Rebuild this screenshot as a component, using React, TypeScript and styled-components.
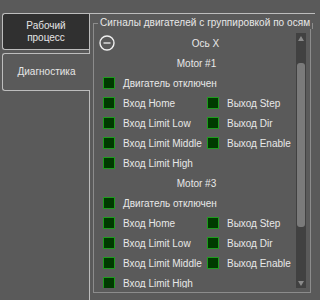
import React from 'react';
import styled, { createGlobalStyle } from 'styled-components';

const GlobalStyle = createGlobalStyle`
	html, body {
		margin: 0;
		padding: 0;
		background: #5a5a5a;
	}
	body {
		font-family: 'Liberation Sans', Arial, sans-serif;
		font-size: 10px;
		color: #e8e8e8;
	}
`;

const Window = styled('div')`
	display: flex;
	width: 315px;
	height: 300px;
	overflow: hidden;
	background: #5a5a5a;
`;

const TabBar = styled('div')`
	display: flex;
	flex-direction: column;
	gap: 3px;
	width: 87px;
	padding: 13px 0 0 2px;
	flex-shrink: 0;
`;

const Tab = styled('div')<{ $active?: boolean }>`
	position: relative;
	z-index: ${(p) => (p.$active ? 1 : 0)};
	display: flex;
	align-items: center;
	justify-content: center;
	height: ${(p) => (p.$active ? 36 : 35)}px;
	margin-right: ${(p) => (p.$active ? '-1px' : '0')};
	border: 1px solid #bdbdbd;
	border-right: none;
	border-radius: 3px 0 0 3px;
	background: ${(p) => (p.$active ? '#5a5a5a' : '#303030')};
	color: #e6e6e6;
	font-size: 10px;
	line-height: 12px;
	text-align: center;
`;

const Pane = styled('div')`
	flex: 1;
	display: flex;
	min-width: 0;
	margin-top: 13px;
	padding: 3px 4px 7px 3px;
	border-top: 1px solid #bdbdbd;
	border-left: 1px solid #bdbdbd;
`;

const GroupBox = styled('div')`
	flex: 1;
	display: flex;
	flex-direction: column;
	min-width: 0;
	min-height: 0;
`;

const GroupHeader = styled('div')`
	display: flex;
	height: 12px;
	flex-shrink: 0;
`;

const HeaderEdge = styled('div')<{ $right?: boolean }>`
	align-self: flex-end;
	height: 5px;
	width: ${(p) => (p.$right ? 'auto' : '4px')};
	flex: ${(p) => (p.$right ? 1 : 'none')};
	border-top: 1px solid #8c8c8c;
	${(p) => (p.$right ? 'border-right: 1px solid #8c8c8c;' : 'border-left: 1px solid #8c8c8c;')}
`;

const GroupTitle = styled('div')`
	padding: 0 2px;
	font-size: 10px;
	line-height: 12px;
	color: #e8e8e8;
	white-space: nowrap;
	letter-spacing: 0.05px;
`;

const GroupBody = styled('div')`
	flex: 1;
	display: flex;
	min-height: 0;
	padding: 4px 4px 4px 3px;
	border: 1px solid #8c8c8c;
	border-top: none;
`;

const ScrollArea = styled('div')`
	flex: 1;
	display: flex;
	min-height: 0;
	overflow: hidden;
`;

const List = styled('div')`
	flex: 1;
	display: flex;
	flex-direction: column;
	overflow: hidden;
`;

const AxisRow = styled('div')`
	display: flex;
	align-items: center;
	height: 20px;
	padding-left: 2px;
	flex-shrink: 0;
`;

const AxisLabel = styled('div')`
	flex: 1;
	text-align: center;
`;

const MotorTitle = styled('div')`
	display: flex;
	align-items: center;
	justify-content: center;
	height: 20px;
	flex-shrink: 0;
`;

const SignalGrid = styled('div')`
	display: grid;
	grid-template-columns: 104px auto;
	grid-auto-rows: 20px;
	padding-left: 6px;
	flex-shrink: 0;
`;

const Signal = styled('div')<{ $span?: boolean }>`
	display: flex;
	align-items: center;
	gap: 8px;
	white-space: nowrap;
	grid-column: ${(p) => (p.$span ? '1 / 3' : 'auto')};
`;

const Led = styled('span')`
	width: 10px;
	height: 10px;
	border: 1px solid #1f9a1f;
	background: #003a00;
	flex-shrink: 0;
`;

const ScrollBar = styled('div')`
	display: flex;
	flex-direction: column;
	width: 10px;
	background: #414141;
	flex-shrink: 0;
`;

const Arrow = styled('div')<{ $down?: boolean }>`
	display: flex;
	align-items: center;
	justify-content: center;
	height: 10px;
	flex-shrink: 0;
	&::before {
		content: '';
		border-left: 3px solid transparent;
		border-right: 3px solid transparent;
		${(p) => (p.$down ? 'border-top: 5px solid #8a8a8a;' : 'border-bottom: 5px solid #8a8a8a;')}
	}
`;

const Track = styled('div')`
	flex: 1;
	display: flex;
	flex-direction: column;
	padding: 20px 1px 51px;
`;

const Handle = styled('div')`
	flex: 1;
	background: #7a7a7a;
	border-radius: 3px;
`;

const CollapseIcon = () => (
	<svg width="16" height="16" viewBox="0 0 16 16">
		<circle cx="8" cy="8" r="7" fill="none" stroke="#f0f0f0" strokeWidth="1.4" />
		<line x1="4.5" y1="8" x2="11.5" y2="8" stroke="#f0f0f0" strokeWidth="1.3" />
	</svg>
);

const Motor = ({ n }: { n: number }) => (
	<>
		<MotorTitle>Motor #{n}</MotorTitle>
		<SignalGrid>
			<Signal $span>
				<Led />
				Двигатель отключен
			</Signal>
			<Signal>
				<Led />
				Вход Home
			</Signal>
			<Signal>
				<Led />
				Выход Step
			</Signal>
			<Signal>
				<Led />
				Вход Limit Low
			</Signal>
			<Signal>
				<Led />
				Выход Dir
			</Signal>
			<Signal>
				<Led />
				Вход Limit Middle
			</Signal>
			<Signal>
				<Led />
				Выход Enable
			</Signal>
			<Signal $span>
				<Led />
				Вход Limit High
			</Signal>
		</SignalGrid>
	</>
);

const App = () => (
	<>
		<GlobalStyle />
		<Window>
			<TabBar>
				<Tab>
					Рабочий
					<br />
					процесс
				</Tab>
				<Tab $active>Диагностика</Tab>
			</TabBar>
			<Pane>
				<GroupBox>
					<GroupHeader>
						<HeaderEdge />
						<GroupTitle>Сигналы двигателей с группировкой по осям</GroupTitle>
						<HeaderEdge $right />
					</GroupHeader>
					<GroupBody>
						<ScrollArea>
							<List>
								<AxisRow>
									<CollapseIcon />
									<AxisLabel>Ось X</AxisLabel>
								</AxisRow>
								<Motor n={1} />
								<Motor n={3} />
							</List>
							<ScrollBar>
								<Arrow />
								<Track>
									<Handle />
								</Track>
								<Arrow $down />
							</ScrollBar>
						</ScrollArea>
					</GroupBody>
				</GroupBox>
			</Pane>
		</Window>
	</>
);

export default App;
